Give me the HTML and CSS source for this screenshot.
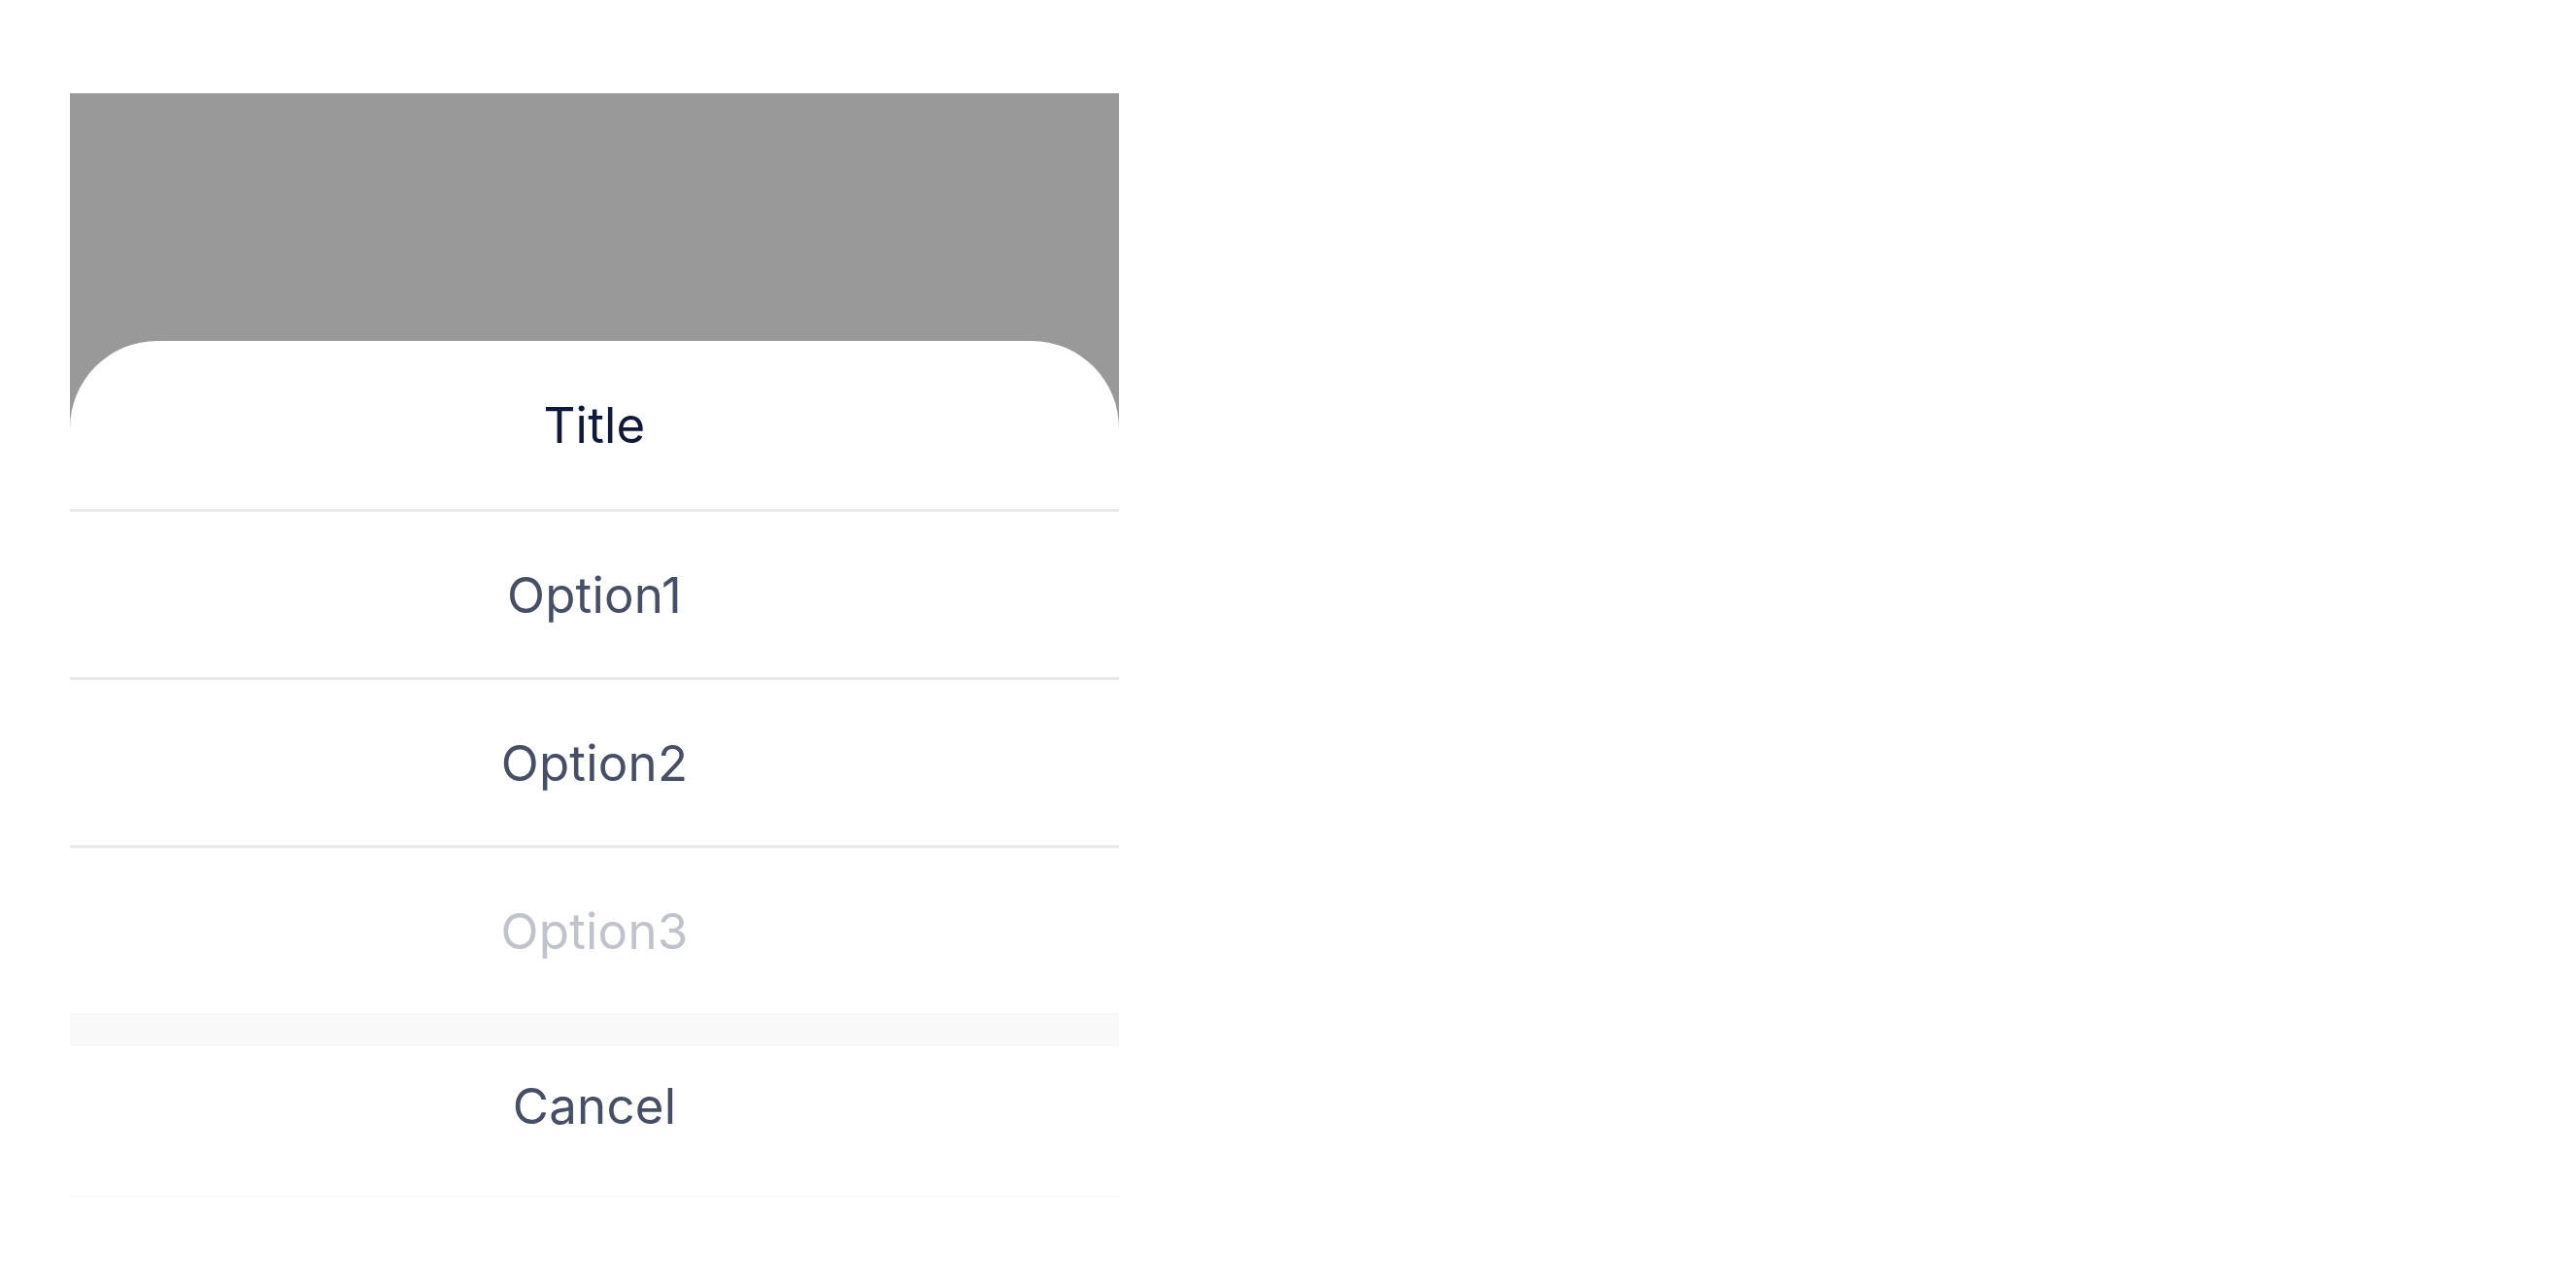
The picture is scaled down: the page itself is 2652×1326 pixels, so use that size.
FILE: index.html
```html
<!DOCTYPE html>
<html lang="en">
<head>
<meta charset="utf-8">
<title>Action Sheet</title>
<link rel="stylesheet" href="styles.css">
</head>
<body>
<div class="stage">
  <div class="overlay">
    <div class="sheet">
      <div class="item title">Title</div>
      <div class="item option">Option1</div>
      <div class="item option">Option2</div>
      <div class="item option disabled last">Option3</div>
      <div class="gap"></div>
      <div class="cancel">Cancel</div>
    </div>
  </div>
</div>
</body>
</html>
```

FILE: styles.css
```css
html, body {
  margin: 0;
  padding: 0;
  background: #ffffff;
}

body {
  font-family: Inter, "Noto Sans", "Liberation Sans", sans-serif;
}

.stage {
  padding: 96px 0 0 72px;
}

.overlay {
  width: 1080px;
  background: #999999;
  padding-top: 255px;
}

.sheet {
  background: #ffffff;
  border-radius: 90px 90px 0 0;
  display: flex;
  flex-direction: column;
  border-bottom: 1px solid #f6f6f6;
}

.item {
  display: flex;
  align-items: center;
  justify-content: center;
  height: 170px;
  font-size: 51px;
  letter-spacing: 0.2px;
  color: #474f66;
  border-bottom: 3px solid #e9e9ea;
}

.item.title {
  height: 173px;
  color: #101a38;
}

.item.last {
  border-bottom: none;
}

.item.disabled {
  color: #c0c3cb;
}

.gap {
  height: 34px;
  background: #f9f9fa;
}

.cancel {
  display: flex;
  align-items: center;
  justify-content: center;
  height: 122px;
  padding-bottom: 32px;
  font-size: 51px;
  letter-spacing: 0.2px;
  color: #474f66;
}
```
